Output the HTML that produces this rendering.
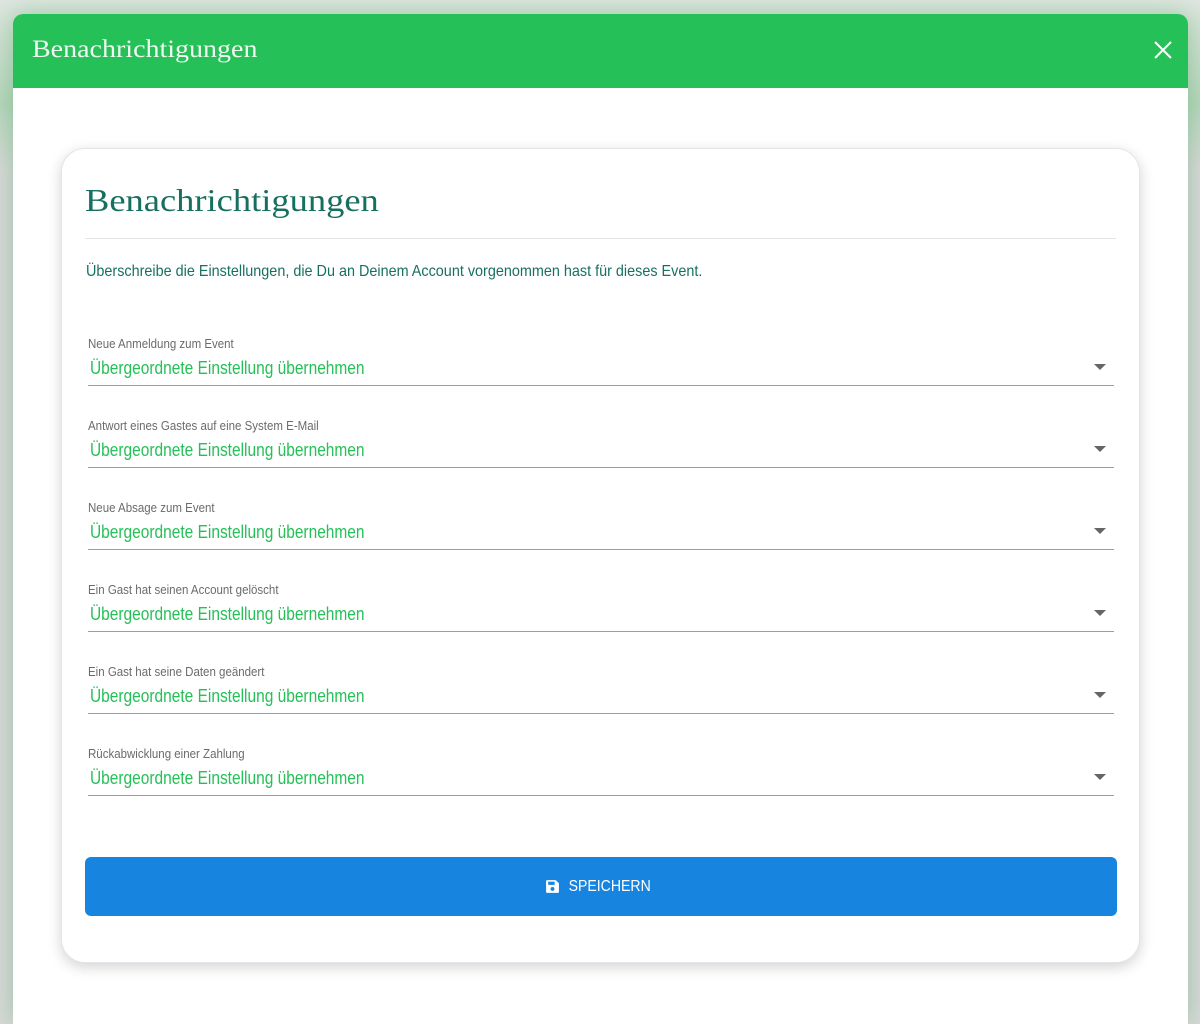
<!DOCTYPE html>
<html><head><meta charset="utf-8"><style>
*{box-sizing:border-box;margin:0;padding:0}
body{width:1200px;height:1006px;overflow:hidden;background:#d9d9d9;position:relative;font-family:"Liberation Sans",sans-serif}
.bgtop{position:absolute;left:0;top:0;width:1200px;height:170px;background:linear-gradient(#dfe6e0,#b9d6bd 60%,#d9d9d9)}
.modal{position:absolute;left:13px;top:14px;width:1175px;height:1010px;background:#fff;border-radius:10px 10px 0 0;overflow:hidden;box-shadow:0 0 25px rgba(40,150,70,.35)}
.hdr{height:74px;background:#25c057;position:relative}
.hdr h1{font-family:"Liberation Serif",serif;font-weight:normal;color:#eef8f0;font-size:25px;position:absolute;left:19px;top:22px;transform:scaleX(1.12);transform-origin:left}
.x{position:absolute;right:16px;top:27px}
.card{position:absolute;left:48px;top:134px;width:1079px;height:815px;border-radius:24px;background:#fff;border:1px solid #e2e6ea;box-shadow:0 4px 14px rgba(0,0,0,.18)}
.card h2{font-family:"Liberation Serif",serif;font-weight:normal;color:#17705f;font-size:32px;position:absolute;left:23px;top:33px;transform:scaleX(1.14);transform-origin:left}
.hr{position:absolute;left:23px;right:23px;top:89px;border-top:1px solid #e3e6e8}
.desc{position:absolute;left:24px;top:114px;color:#17705f;font-size:16px;transform:scaleX(0.9);transform-origin:left;white-space:nowrap}
.f{position:absolute;left:26px;width:1026px;height:50px;border-bottom:1px solid #8aa2b2}
.f .l{position:absolute;left:0;top:1px;font-size:12.5px;color:#6b6b6b;transform:scaleX(0.92);transform-origin:left;white-space:nowrap}
.f .v{position:absolute;left:2px;top:22px;font-size:18px;color:#25c057;transform:scaleX(0.86);transform-origin:left;white-space:nowrap}
.f .a{position:absolute;right:8px;top:28px;width:0;height:0;border-left:6px solid transparent;border-right:6px solid transparent;border-top:6px solid #666}
.btn{position:absolute;left:23px;top:708px;width:1032px;height:59px;background:#1785e0;border-radius:6px;color:#fff;font-size:16px;display:flex;align-items:center;justify-content:center;gap:3px}
.btn span{display:inline-block;transform:scaleX(0.88)}
</style></head><body>
<div class="bgtop"></div>
<div class="modal">
<div class="hdr"><h1>Benachrichtigungen</h1>
<svg class="x" width="18" height="18" viewBox="0 0 18 18"><path d="M1 1L17 17M17 1L1 17" stroke="#fff" stroke-width="2"/></svg></div>
<div class="card">
<h2>Benachrichtigungen</h2>
<div class="hr"></div>
<div class="desc">Überschreibe die Einstellungen, die Du an Deinem Account vorgenommen hast für dieses Event.</div>
<div class="f" style="top:187px"><div class="l">Neue Anmeldung zum Event</div><div class="v">Übergeordnete Einstellung übernehmen</div><div class="a"></div></div>
<div class="f" style="top:269px"><div class="l">Antwort eines Gastes auf eine System E-Mail</div><div class="v">Übergeordnete Einstellung übernehmen</div><div class="a"></div></div>
<div class="f" style="top:351px"><div class="l">Neue Absage zum Event</div><div class="v">Übergeordnete Einstellung übernehmen</div><div class="a"></div></div>
<div class="f" style="top:433px"><div class="l">Ein Gast hat seinen Account gelöscht</div><div class="v">Übergeordnete Einstellung übernehmen</div><div class="a"></div></div>
<div class="f" style="top:515px"><div class="l">Ein Gast hat seine Daten geändert</div><div class="v">Übergeordnete Einstellung übernehmen</div><div class="a"></div></div>
<div class="f" style="top:597px"><div class="l">Rückabwicklung einer Zahlung</div><div class="v">Übergeordnete Einstellung übernehmen</div><div class="a"></div></div>
<div class="btn"><svg width="15" height="15" viewBox="0 0 14 14"><path d="M1 2a1 1 0 0 1 1-1h8l3 3v8a1 1 0 0 1-1 1H2a1 1 0 0 1-1-1z" fill="#fff"/><rect x="3" y="2.5" width="6" height="3" fill="#1785e0"/><circle cx="7" cy="9.3" r="1.8" fill="#1785e0"/></svg><span>SPEICHERN</span></div>
</div>
</div>
</body></html>
